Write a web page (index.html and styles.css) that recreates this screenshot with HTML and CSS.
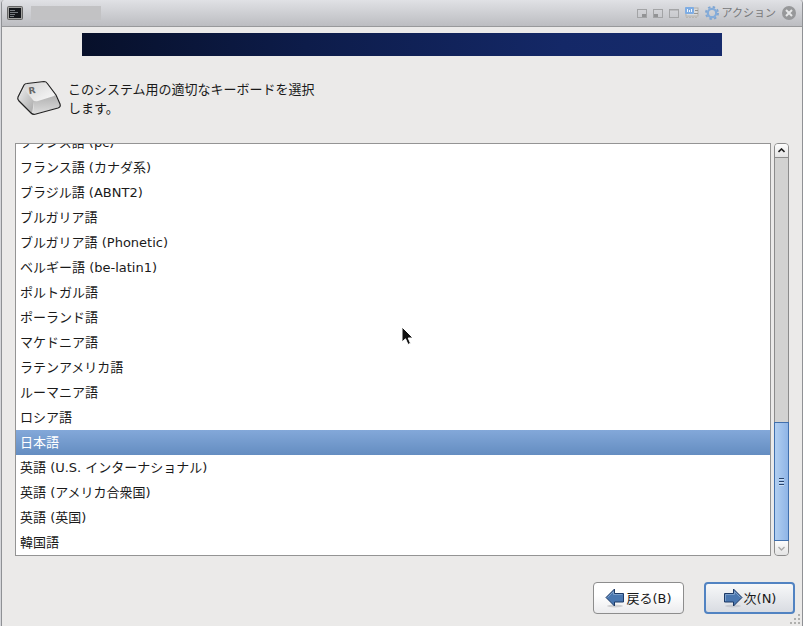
FILE: index.html
```
<!DOCTYPE html>
<html lang="ja">
<head>
    <meta charset="UTF-8">
    <meta name="viewport" content="width=device-width, initial-scale=1.0">
    <title>キーボードの選択</title>
    <link rel="stylesheet" href="styles.css">
</head>
<body>
    <div class="window">
        <header class="titlebar">
            <svg class="term-icon" width="16" height="14" viewBox="0 0 16 14">
                <rect x=".5" y=".5" width="15" height="13" rx="1" fill="#a2a2a0" stroke="#666"/>
                <rect x="2" y="2" width="12" height="10" fill="#15171b"/>
                <path d="M3 4.500h5M3 6.500h8M3 8.500h5M3 10.500h4" stroke="#777b80"/>
            </svg>
            <span class="title-blank"></span>
            <div class="window-tools">
                <button class="tool" aria-label="最小化">
                    <svg width="10" height="9" viewBox="0 0 10 9"><rect x=".5" y=".5" width="9" height="8" fill="none" stroke="#a3a4a6"/><rect x="5" y="5" width="4" height="3" fill="#929395"/></svg>
                </button>
                <button class="tool" aria-label="元に戻す">
                    <svg width="10" height="9" viewBox="0 0 10 9"><rect x=".5" y=".5" width="9" height="8" fill="none" stroke="#a3a4a6"/><rect x="1" y="5" width="4" height="3" fill="#929395"/></svg>
                </button>
                <button class="tool" aria-label="最大化">
                    <svg width="10" height="9" viewBox="0 0 10 9"><rect x=".5" y=".5" width="9" height="8" fill="none" stroke="#a3a4a6"/><path d="M0 1h10" stroke="#a3a4a6"/></svg>
                </button>
                <button class="tool" aria-label="キーボード">
                    <svg width="14" height="12" viewBox="0 0 14 12">
                        <rect x="1" y="1" width="12" height="8" fill="#d9dadb" stroke="#b2b0ac"/>
                        <rect width="9" height="7" rx="1" fill="#7fade3"/>
                        <path d="M2.500 2v3M4.500 3v2M6.500 2v3" stroke="#f1f6fc"/>
                        <path d="M10 3.500h3M9 6.500h4" stroke="#96948f"/>
                        <path d="M1 10.500h12" stroke="#b9b6b0" stroke-dasharray="2 1"/>
                    </svg>
                </button>
                <button class="action">
                    <svg width="14" height="14" viewBox="0 0 14 14">
                        <circle cx="7" cy="7" r="6" fill="none" stroke="#7fa6d3" stroke-width="2" stroke-dasharray="2.400 2.312"/>
                        <circle cx="7" cy="7" r="4.200" fill="none" stroke="#84acda" stroke-width="2.200"/>
                    </svg>
                    アクション
                </button>
                <button class="close" aria-label="閉じる">
                    <svg width="14" height="14" viewBox="0 0 14 14"><circle cx="7" cy="7" r="7" fill="#97989a"/><path d="M4 4l6 6M10 4l-6 6" stroke="#e6e7e8" stroke-width="2"/></svg>
                </button>
            </div>
        </header>

        <div class="banner"></div>

        <main>
            <div class="intro">
                <svg class="key-icon" width="46" height="36" viewBox="0 0 46 36">
                    <defs>
                        <linearGradient id="keyTop" x1="0" y1="0" x2="1" y2="1"><stop offset="0" stop-color="#d2d2d2"/><stop offset="1" stop-color="#fafafa"/></linearGradient>
                        <linearGradient id="keyLeft" x1="0" y1="0" x2="1" y2="1"><stop offset="0" stop-color="#f2f2f2"/><stop offset="1" stop-color="#a6a6a6"/></linearGradient>
                        <linearGradient id="keyFront" x1="0" y1="0" x2="0" y2="1"><stop offset="0" stop-color="#b0b0b0"/><stop offset="1" stop-color="#dedede"/></linearGradient>
                    </defs>
                    <path d="M8 5Q9 3.500 11 3.500L28 1.500Q30 1.500 31 3L40 15L44 24Q45 27 42 28L20 34Q17 35 15 33L3 21Q1 19 2 17Z" fill="#ececec"/>
                    <path d="M8 5L2 17Q1 19 3 21L16 34L18 21Z" fill="url(#keyLeft)"/>
                    <path d="M18 21L39 15L44 25Q44 27 42 28L17 34Z" fill="url(#keyFront)"/>
                    <path d="M8 5Q9 3.500 11 3.500L28 1.500Q30 1.500 31 3L39 13Q40 15 38 16L22 21Q19 22 17 20L8 9Z" fill="url(#keyTop)"/>
                    <path d="M8 5Q9 3.500 11 3.500L28 1.500Q30 1.500 31 3L40 15L44 24Q45 27 42 28L20 34Q17 35 15 33L3 21Q1 19 2 17Z" fill="none" stroke="#222" stroke-width="1.200"/>
                    <text class="key-letter" x="13" y="14" transform="rotate(-8 13 14)">R</text>
                </svg>
                <p>このシステム用の適切なキーボードを選択<br>します。</p>
            </div>

            <div class="chooser">
                <div class="list" role="radiogroup" aria-label="キーボード">
                    <label><input type="radio" name="keyboard">フランス語 (pc)</label>
                    <label><input type="radio" name="keyboard">フランス語 (カナダ系)</label>
                    <label><input type="radio" name="keyboard">ブラジル語 (ABNT2)</label>
                    <label><input type="radio" name="keyboard">ブルガリア語</label>
                    <label><input type="radio" name="keyboard">ブルガリア語 (Phonetic)</label>
                    <label><input type="radio" name="keyboard">ベルギー語 (be-latin1)</label>
                    <label><input type="radio" name="keyboard">ポルトガル語</label>
                    <label><input type="radio" name="keyboard">ポーランド語</label>
                    <label><input type="radio" name="keyboard">マケドニア語</label>
                    <label><input type="radio" name="keyboard">ラテンアメリカ語</label>
                    <label><input type="radio" name="keyboard">ルーマニア語</label>
                    <label><input type="radio" name="keyboard">ロシア語</label>
                    <label><input type="radio" name="keyboard" checked>日本語</label>
                    <label><input type="radio" name="keyboard">英語 (U.S. インターナショナル)</label>
                    <label><input type="radio" name="keyboard">英語 (アメリカ合衆国)</label>
                    <label><input type="radio" name="keyboard">英語 (英国)</label>
                    <label><input type="radio" name="keyboard">韓国語</label>
                </div>
                <div class="scrollbar">
                    <button class="step up" aria-label="上へ"><svg width="7" height="5" viewBox="0 0 7 5"><path d="M.500 4L3.500 1L6.500 4" fill="none" stroke="#222" stroke-width="1.600"/></svg></button>
                    <div class="track"></div>
                    <div class="thumb"><svg width="5" height="8" viewBox="0 0 5 8"><path d="M0 .500h5M0 3.500h5M0 6.500h5" stroke="#26436c"/><path d="M0 1.500h5M0 4.500h5M0 7.500h5" stroke="#c9def5"/></svg></div>
                    <button class="step down" aria-label="下へ"><svg width="7" height="5" viewBox="0 0 7 5"><path d="M.500 1L3.500 4L6.500 1" fill="none" stroke="#aaa" stroke-width="1.400"/></svg></button>
                </div>
            </div>
        </main>

        <footer>
            <button class="nav">
                <svg width="20" height="20" viewBox="0 0 20 20">
                    <ellipse cx="10" cy="18" rx="8" ry="1.500" fill="#d0d0d2"/>
                    <path d="M1 9.500L9.500 1V5.500H18.500V14H9.500V18Z" fill="#4a77b0" stroke="#1d3a66"/>
                    <path d="M2.500 9.500L8.500 3.500V6.500H17.500" fill="none" stroke="#7c9fca"/>
                </svg>
                戻る(B)
            </button>
            <button class="nav next">
                <svg width="20" height="20" viewBox="0 0 20 20">
                    <ellipse cx="10" cy="18" rx="8" ry="1.500" fill="#c8cbd2"/>
                    <path d="M19 9.500L10.500 1V5.500H1.500V14H10.500V18Z" fill="#4a77b0" stroke="#1d3a66"/>
                    <path d="M2.500 13V6.500H11.500V3.500L17.500 9.500" fill="none" stroke="#7c9fca"/>
                </svg>
                次(N)
            </button>
        </footer>

        <svg class="grip" width="11" height="11" viewBox="0 0 11 11"><path d="M8 1h2M4 5h2M8 5h2M0 9h2M4 9h2M8 9h2" stroke="#b0b0ae" stroke-width="2"/></svg>
        <svg class="pointer" width="13" height="20" viewBox="0 0 13 20">
            <path d="M1 1V16L4.500 12.800L7 18.500L9.500 17.300L7.200 12H12Z" fill="#111" stroke="#fff"/>
        </svg>
    </div>
</body>
</html>
```

FILE: styles.css
```
* { box-sizing: border-box; }
body { margin: 0; padding: 0 0 0 1px; background: #d5d6da; font: 13px/19px "DejaVu Sans", "Noto Sans CJK JP", sans-serif; color: #1a1a1a; }
button { margin: 0; padding: 0; border: 0; background: none; font: inherit; color: inherit; }
svg { display: block; flex: none; }

.window { position: relative; display: flex; flex-direction: column; height: 100vh; overflow: hidden; border: solid #8f9195; border-width: 0 1px; border-radius: 4px 4px 0 0; background: #ebeae9; }

.titlebar { display: flex; align-items: center; flex: none; height: 27px; padding: 0 6px 0 5px; border-bottom: 1px solid #98999b; background: linear-gradient(#e0e1e5, #bcbdc1); }
.title-blank { width: 70px; height: 14px; margin-left: 8px; background: #c2c2c4; }
.window-tools { display: flex; align-items: center; gap: 6px; margin-left: auto; }
.action { display: flex; align-items: center; gap: 3px; font-size: 11px; color: #77787a; }

.banner { flex: none; width: 640px; max-width: 100%; height: 23px; margin: 6px auto 0; background: linear-gradient(90deg, #07102a, #0d1c4a 35%, #142867 75%, #162b6c); }

main { display: flex; flex-direction: column; flex: 1; min-height: 0; padding: 24px 13px 0; }
.intro { display: flex; align-items: flex-start; gap: 6px; height: 63px; }
.intro p { margin: 0; }
.key-icon { margin-left: 1px; }
.key-letter { font: bold 9px "DejaVu Sans", sans-serif; fill: #666; }

.chooser { display: flex; flex: 1; gap: 3px; min-height: 0; }
.list { display: flex; flex-direction: column; justify-content: flex-end; flex: 1; overflow: hidden; border: 1px solid #949494; background: #fff; }
.list label { flex: none; height: 25px; padding-left: 4px; line-height: 25px; }
.list label:has(:checked) { background: linear-gradient(#83a8d9, #648dc1); color: #fff; }
.list input { position: absolute; opacity: 0; }

.scrollbar { display: flex; flex-direction: column; width: 15px; border: 1px solid #8c8c8c; border-radius: 4px; background: #d2d2d1; }
.step { display: flex; align-items: center; justify-content: center; height: 14px; background: linear-gradient(#fdfdfd, #e4e4e4); }
.up { border-bottom: 1px solid #8c8c8c; border-radius: 3px 3px 0 0; }
.down { border-radius: 0 0 3px 3px; }
.track { flex: 267; }
.thumb { display: flex; align-items: center; justify-content: center; flex: 118; margin: 0 -1px; border: 1px solid #4170ad; background: linear-gradient(90deg, #b2cff1, #8fb5e6); }

footer { display: flex; justify-content: flex-end; gap: 20px; padding: 26px 7px 12px; }
.nav { display: flex; align-items: center; justify-content: center; gap: 1px; width: 91px; height: 32px; border: 1px solid #8d8d8d; border-radius: 4px; background: linear-gradient(#fff 40%, #ebebed); }
.next { border: 2px solid #5183c2; background: linear-gradient(#f7f8f9, #d9dce2); }

.grip { position: absolute; right: 1px; bottom: 1px; }
.pointer { position: absolute; left: 399px; top: 326px; }
```
